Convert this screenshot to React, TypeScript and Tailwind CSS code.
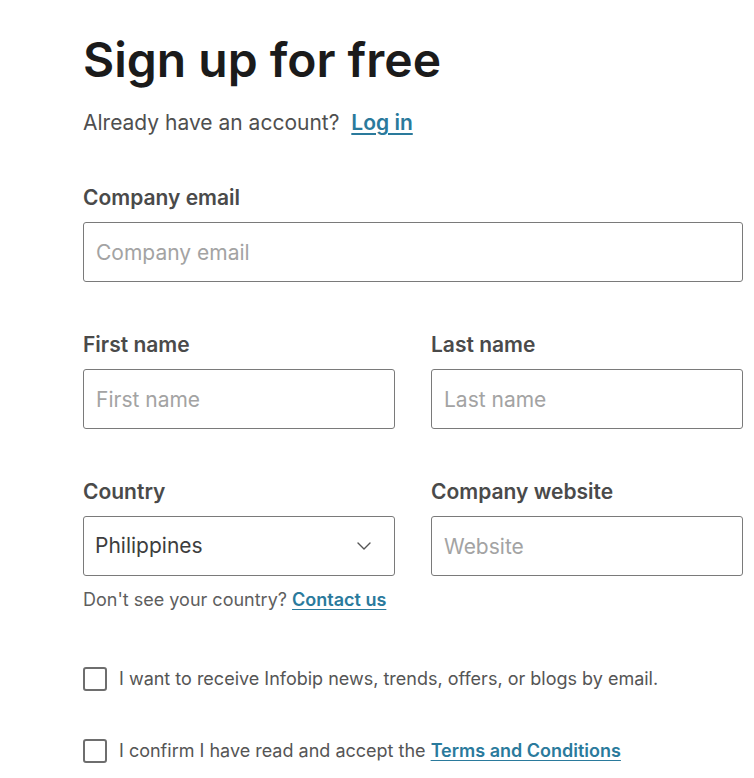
import { ChevronDown } from "lucide-react";

const inter = "font-['Inter','Liberation_Sans',sans-serif]";

function Field({ label, placeholder }: { label: string; placeholder: string }) {
  return (
    <div className="flex flex-col">
      <label className="text-[21px] font-semibold text-[#4a4a4a] leading-[24px]">{label}</label>
      <input
        placeholder={placeholder}
        className="mt-[12px] h-[60px] w-full rounded-[3px] border border-[#7a7a7a] px-[12px] text-[21px] text-[#333] placeholder:text-[#a3a3a3] outline-none"
      />
    </div>
  );
}

function Check({ children }: { children: React.ReactNode }) {
  return (
    <label className="flex items-center gap-[12px] text-[18px] text-[#555] leading-[24px]">
      <span className="h-[24px] w-[24px] shrink-0 rounded-[3px] border-2 border-[#6e6e6e]" />
      <span>{children}</span>
    </label>
  );
}

export default function App() {
  return (
    <div className={`${inter} min-h-[778px] bg-white pl-[83px] pr-[11px] pt-[30px]`}>
      <h1 className="text-[48px] font-semibold leading-[60px] text-[#1b1b1b]">Sign up for free</h1>
      <p className="mt-[20px] text-[21px] leading-[26px] text-[#4f4f4f]">
        Already have an account?{" "}
        <a href="#" className="ml-[6px] font-semibold text-[#2a7a9c] underline underline-offset-[3px]">Log in</a>
      </p>

      <div className="mt-[50px]">
        <Field label="Company email" placeholder="Company email" />
      </div>

      <div className="mt-[51px] grid grid-cols-2 gap-x-[36px]">
        <Field label="First name" placeholder="First name" />
        <Field label="Last name" placeholder="Last name" />
      </div>

      <div className="mt-[51px] grid grid-cols-2 gap-x-[36px]">
        <div className="flex flex-col">
          <label className="text-[21px] font-semibold text-[#4a4a4a] leading-[24px]">Country</label>
          <div className="mt-[12px] flex h-[60px] items-center justify-between rounded-[3px] border border-[#7a7a7a] pl-[11px] pr-[18px]">
            <span className="text-[21px] text-[#3d3d3d]">Philippines</span>
            <ChevronDown className="h-[24px] w-[24px] text-[#555]" strokeWidth={1.4} />
          </div>
          <p className="mt-[13px] text-[18px] leading-[22px] text-[#5e5e5e]">
            Don't see your country?{" "}
            <a href="#" className="font-semibold text-[#2a7a9c] underline underline-offset-[3px]">Contact us</a>
          </p>
        </div>
        <Field label="Company website" placeholder="Website" />
      </div>

      <div className="mt-[56px] flex flex-col gap-[48px]">
        <Check>I want to receive Infobip news, trends, offers, or blogs by email.</Check>
        <Check>
          I confirm I have read and accept the{" "}
          <a href="#" className="font-semibold text-[#2a7a9c] underline underline-offset-[3px]">Terms and Conditions</a>
        </Check>
      </div>
    </div>
  );
}
